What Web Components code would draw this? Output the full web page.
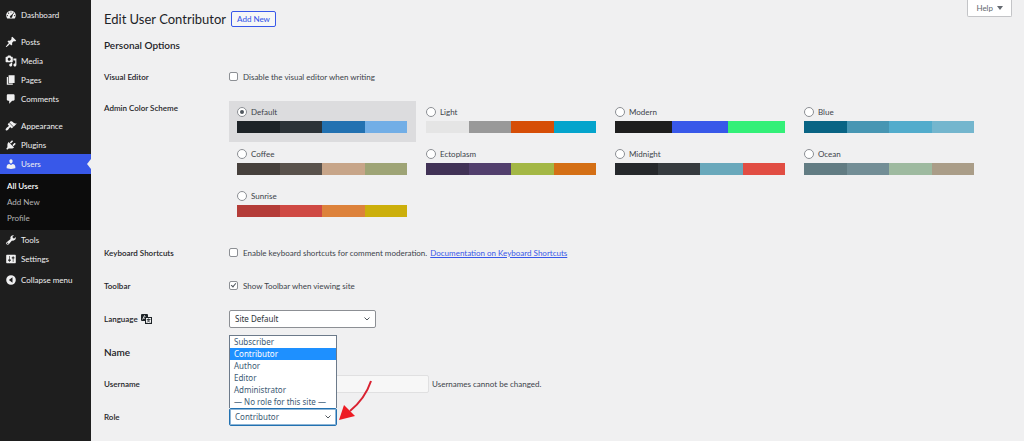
<!DOCTYPE html>
<html lang="en">
<head>
<meta charset="utf-8">
<title>Edit User Contributor</title>
<style>
  html, body { margin: 0; min-height: 100%; }
  body { background: #f0f0f1; color: #3c434a; font: 8px/12px Lato, "Open Sans", sans-serif; }
</style>
</head>
<body>
<wp-admin>
  <admin-menu slot="menu">
    <menu-item icon="dashboard">Dashboard</menu-item>
    <menu-item icon="posts" spaced>Posts</menu-item>
    <menu-item icon="media">Media</menu-item>
    <menu-item icon="pages">Pages</menu-item>
    <menu-item icon="comments">Comments</menu-item>
    <menu-item icon="appearance" spaced>Appearance</menu-item>
    <menu-item icon="plugins">Plugins</menu-item>
    <menu-item icon="users" current>Users</menu-item>
    <sub-menu>
      <sub-item current>All Users</sub-item>
      <sub-item>Add New</sub-item>
      <sub-item>Profile</sub-item>
    </sub-menu>
    <menu-item icon="tools">Tools</menu-item>
    <menu-item icon="settings">Settings</menu-item>
    <menu-item icon="collapse" small>Collapse menu</menu-item>
  </admin-menu>
  <help-tab slot="help">Help</help-tab>
  <page-title action="Add New">Edit User Contributor</page-title>
  <section-title>Personal Options</section-title>
  <form-row label="Visual Editor"><check-field>Disable the visual editor when writing</check-field></form-row>
  <form-row label="Admin Color Scheme" top><color-schemes></color-schemes></form-row>
  <form-row label="Keyboard Shortcuts"><check-field>Enable keyboard shortcuts for comment moderation.<doc-link slot="after">Documentation on Keyboard Shortcuts</doc-link></check-field></form-row>
  <form-row label="Toolbar"><check-field checked>Show Toolbar when viewing site</check-field></form-row>
  <form-row label="Language" icon><select-field label="Language" size="wide" options="Site Default"></select-field></form-row>
  <section-title>Name</section-title>
  <form-row label="Username"><name-field>Usernames cannot be changed.</name-field></form-row>
  <form-row label="Role"><select-field label="Role" open value="Contributor" options="Subscriber|Contributor|Author|Editor|Administrator|— No role for this site —"></select-field></form-row>
</wp-admin>

<script>
const ICONS = {
  dashboard: '<path fill-rule="evenodd" d="M3.76 16h12.48c1.1-1.37 1.76-3.11 1.76-5 0-4.42-3.58-8-8-8s-8 3.58-8 8c0 1.89.66 3.63 1.76 5zM10 4c.55 0 1 .45 1 1s-.45 1-1 1-1-.45-1-1 .45-1 1-1zM6 6c.55 0 1 .45 1 1s-.45 1-1 1-1-.45-1-1 .45-1 1-1zm8 0c.55 0 1 .45 1 1s-.45 1-1 1-1-.45-1-1 .45-1 1-1zm-5.37 5.55L14 7l-2 6c0 1.1-.9 2-2 2s-2-.9-2-2c0-.57.24-1.08.63-1.45zM4 10c.55 0 1 .45 1 1s-.45 1-1 1-1-.45-1-1 .45-1 1-1zm12 0c.55 0 1 .45 1 1s-.45 1-1 1-1-.45-1-1 .45-1 1-1z"/>',
  posts: '<path d="M10.44 3.02l1.82-1.82 6.36 6.35-1.83 1.82c-1.05-.68-2.48-.57-3.41.36l-.75.75c-.92.93-1.04 2.35-.35 3.41l-1.83 1.82-2.41-2.41-2.8 2.79c-.42.42-3.38 2.71-3.8 2.29s1.86-3.39 2.28-3.81l2.79-2.79L4.1 9.36l1.83-1.82c1.05.69 2.48.57 3.4-.36l.75-.75c.93-.92 1.05-2.35.36-3.41z"/>',
  media: '<path fill-rule="evenodd" d="M13 11V4c0-.55-.45-1-1-1h-1.67L9 1H5L3.67 3H2c-.55 0-1 .45-1 1v7c0 .55.45 1 1 1h10c.55 0 1-.45 1-1zM7 4.5c1.38 0 2.5 1.12 2.5 2.5S8.38 9.5 7 9.5 4.5 8.38 4.5 7 5.62 4.5 7 4.5zM14 6h5v10.5c0 1.38-1.12 2.5-2.5 2.5S14 17.88 14 16.5s1.12-2.5 2.5-2.5c.17 0 .34.02.5.05V9h-3V6zm-4 8.05V13h2v3.5c0 1.38-1.12 2.5-2.5 2.5S7 17.88 7 16.5 8.12 14 9.5 14c.17 0 .34.02.5.05z"/>',
  pages: '<path d="M6 15V2h10v13H6zm-1 1h8v2H3V5h2v11z"/>',
  comments: '<path d="M5 2h9c1.1 0 2 .9 2 2v7c0 1.1-.9 2-2 2h-2l-5 5v-5H5c-1.1 0-2-.9-2-2V4c0-1.1.9-2 2-2z"/>',
  appearance: '<path d="M14.48 11.06L7.41 3.99l1.5-1.5c.5-.56 2.3-.47 3.51.32 1.21.8 1.43 1.28 2.91 2.1 1.18.64 2.45 1.26 4.45.85zm-.71.71L6.7 4.7 4.93 6.47c-.39.39-.39 1.02 0 1.41l1.06 1.06c.39.39.39 1.03 0 1.42-.6.6-1.43 1.11-2.21 1.69-.35.26-.7.53-1.01.84C1.43 14.23.4 16.08 1.4 17.07c.99 1 2.84-.03 4.18-1.36.31-.31.58-.66.85-1.02.57-.78 1.08-1.61 1.69-2.21.39-.39 1.02-.39 1.41 0l1.06 1.06c.39.39 1.02.39 1.41 0z"/>',
  plugins: '<path d="M13.11 4.36L9.87 7.6 8 5.73l3.24-3.24c.35-.34 1.05-.2 1.56.32.52.51.66 1.21.31 1.55zm-8 1.77l.91-1.12 9.01 9.01-1.19.84c-.71.71-2.63 1.16-3.82 1.16H6.14L4.9 17.26c-.59.59-1.54.59-2.12 0-.59-.58-.59-1.53 0-2.12l1.24-1.24v-3.88c0-1.13.4-3.19 1.09-3.89zm7.26 3.97l3.24-3.24c.34-.35 1.04-.21 1.55.31.52.51.66 1.21.31 1.55l-3.24 3.25z"/>',
  users: '<path d="M10 9.25c-2.27 0-2.73-3.44-2.73-3.44C7 4.02 7.82 2 9.97 2c2.16 0 2.98 2.02 2.71 3.81 0 0-.41 3.44-2.68 3.44zm0 2.57L12.72 10c2.39 0 4.52 2.33 4.52 4.53v2.49s-3.65 1.13-7.24 1.13c-3.65 0-7.24-1.13-7.24-1.13v-2.49c0-2.25 1.94-4.48 4.47-4.48z"/>',
  tools: '<path fill-rule="evenodd" d="M16.68 9.77c-1.34 1.34-3.3 1.67-4.95.99l-5.41 6.52c-.99.99-2.59.99-3.58 0s-.99-2.59 0-3.57l6.52-5.42c-.68-1.65-.35-3.61.99-4.95 1.28-1.28 3.12-1.62 4.72-1.06l-2.89 2.89 2.82 2.82 2.86-2.87c.53 1.58.18 3.39-1.08 4.65zM3.81 16.21c.4.39 1.04.39 1.43 0 .4-.4.4-1.04 0-1.43-.39-.4-1.03-.4-1.43 0-.39.39-.39 1.03 0 1.43z"/>',
  settings: '<path fill-rule="evenodd" d="M18 16V4c0-.55-.45-1-1-1H3c-.55 0-1 .45-1 1v12c0 .55.45 1 1 1h14c.55 0 1-.45 1-1zM8 11h1c.55 0 1 .45 1 1s-.45 1-1 1H8v1.5c0 .28-.22.5-.5.5s-.5-.22-.5-.5V13H6c-.55 0-1-.45-1-1s.45-1 1-1h1V5.5c0-.28.22-.5.5-.5s.5.22.5.5V11zm5-2h-1c-.55 0-1-.45-1-1s.45-1 1-1h1V5.5c0-.28.22-.5.5-.5s.5.22.5.5V7h1c.55 0 1 .45 1 1s-.45 1-1 1h-1v5.5c0 .28-.22.5-.5.5s-.5-.22-.5-.5V9z"/>',
  collapse: '<path fill-rule="evenodd" d="M10 2a8 8 0 1 0 0 16 8 8 0 0 0 0-16zM12.500 5.500v9L6.500 10z"/>'
};
const svg = (name) => `<svg viewBox="0 0 20 20" aria-hidden="true">${ICONS[name]}</svg>`;

/* Base class: renders css() and html() into an open shadow root. */
class Base extends HTMLElement {
  connectedCallback() {
    if (this.shadowRoot) return;
    const t = document.createElement('template');
    t.innerHTML = `<style>*{box-sizing:border-box}${this.css()}</style>${this.html()}`;
    this.attachShadow({ mode: 'open' }).append(t.content.cloneNode(true));
  }
  attr(name) { return this.getAttribute(name) || ''; }
}
const define = (name, css, html) => customElements.define(name, class extends Base {
  css() { return css; }
  html() { return typeof html === 'function' ? html(this) : html; }
});

define('wp-admin', `
  :host { display: grid; grid-template-columns: 91px minmax(0, 1fr); min-height: 100vh; overflow: hidden; }
  aside { background: #1e1e1e; }
  main { position: relative; padding: 10px 16px 14px 13px; }
  .help { position: absolute; top: 0; right: 12px; }
`, `<aside><slot name="menu"></slot></aside><main><div class="help"><slot name="help"></slot></div><slot></slot></main>`);

define('admin-menu', `:host { display: block; padding-top: 5px; } nav { display: flex; flex-direction: column; }`,
  `<nav aria-label="Main menu"><slot></slot></nav>`);

define('menu-item', `
  :host { display: block; }
  :host([spaced]) { margin-top: 8px; }
  :host([small]) { margin-top: 2px; }
  a, button { position: relative; display: flex; align-items: center; gap: 4px; width: 100%; height: 19px; padding: 0 0 0 5px;
    border: 0; background: none; color: #f0f0f1; font: inherit; text-decoration: none; white-space: nowrap; }
  svg { width: 12px; height: 12px; fill: #f0f0f1; flex: none; }
  :host([current]) a { height: 20px; background: #3858e9; }
  :host([current]) a::after { content: ""; position: absolute; right: 0; top: 5px; border: 5px solid transparent; border-left: 0; border-right: 4px solid #f0f0f1; }
`, el => el.hasAttribute('small')
  ? `<button type="button">${svg(el.attr('icon'))}<slot></slot></button>`
  : `<a href="#">${svg(el.attr('icon'))}<slot></slot></a>`);

define('sub-menu', `:host { display: block; padding: 4px 0; background: #0c0c0c; }`, `<slot></slot>`);
define('sub-item', `
  :host { display: block; }
  a { display: block; padding-left: 7px; color: #b4b4b4; line-height: 16px; text-decoration: none; }
  :host([current]) a { color: #fff; font-weight: 600; }
`, `<a href="#"><slot></slot></a>`);

define('help-tab', `
  button { display: flex; align-items: center; gap: 4px; height: 17px; padding: 0 8px; background: #fff; border: 1px solid #c3c4c7; border-top: 0;
    border-radius: 0 0 2px 2px; color: #646970; font: inherit; }
  i { border: 3px solid transparent; border-top: 4px solid #646970; border-bottom: 0; }
`, `<button type="button"><slot></slot><i></i></button>`);

define('page-title', `
  :host { display: flex; align-items: center; gap: 5px; height: 18px; }
  h1 { margin: 0; font-size: 13px; line-height: 18px; font-weight: 400; color: #1d2327; }
  button { height: 16px; padding: 0 5px; border: 1px solid #3858e9; border-radius: 2px; background: #f6f7f7; color: #3858e9; font: inherit; font-weight: 500; line-height: 12px; }
`, el => `<h1><slot></slot></h1><button type="button">${el.attr('action')}</button>`);

define('section-title', `
  :host { display: block; padding: 10px 0 8px; }
  h2 { margin: 0; font-size: 10px; line-height: 14px; font-weight: 600; color: #1d2327; }
`, `<h2><slot></slot></h2>`);

define('form-row', `
  :host { display: grid; grid-template-columns: 125px minmax(0, 1fr); align-items: center; min-height: 33px; }
  :host([top]) { align-items: start; padding: 8px 0 10px; }
  .label { display: flex; align-items: center; gap: 3px; font-weight: 600; color: #1d2327; }
  :host([top]) .label { padding-top: 1px; }
  svg { width: 11px; height: 10px; }
`, el => `<div class="label">${el.attr('label')}${el.hasAttribute('icon') ? `
  <svg viewBox="0 0 11 10" aria-hidden="true"><rect x="0" y="0" width="7" height="7" rx="1" fill="#1d2327"/><path d="M1.500 5.500l2-4 2 4M2.200 4.200h2.600" stroke="#f0f0f1" stroke-width=".8" fill="none"/><rect x="4.500" y="3.500" width="6" height="6" fill="#f0f0f1" stroke="#1d2327"/><path d="M5.800 5.500h3.500M7.500 4.500v1M9 5.500L6 8.500M6.500 6l2.500 2.500" stroke="#1d2327" stroke-width=".8" fill="none"/></svg>` : ''}</div><div><slot></slot></div>`);

const TICK = `
  input { appearance: none; flex: none; width: 9px; height: 9px; margin: 0; border: 1px solid #8c8f94; background: #fff; }
`;
define('check-field', TICK + `
  :host { display: flex; align-items: center; gap: 3px; }
  label { display: flex; align-items: center; gap: 5px; }
  input { border-radius: 2px; position: relative; }
  input:checked::after { content: ""; position: absolute; left: 2px; top: 0; width: 2px; height: 4px; border: solid #50575e; border-width: 0 1px 1px 0; transform: rotate(40deg); }
`, el => `<label><input type="checkbox" ${el.hasAttribute('checked') ? 'checked' : ''}><span><slot></slot></span></label><slot name="after"></slot>`);

define('doc-link', `a { color: #3858e9; text-decoration: underline; }`, `<a href="#"><slot></slot></a>`);

const SCHEMES = [
  ['Default', '#1d2327', '#2c3338', '#2271b1', '#72aee6'],
  ['Light', '#e5e5e5', '#999', '#d64e07', '#04a4cc'],
  ['Modern', '#1e1e1e', '#3858e9', '#33f078'],
  ['Blue', '#096484', '#4796b3', '#52accc', '#74b6ce'],
  ['Coffee', '#46403c', '#59524c', '#c7a589', '#9ea476'],
  ['Ectoplasm', '#413256', '#523f6d', '#a3b745', '#d46f15'],
  ['Midnight', '#25282b', '#363b3f', '#69a8bb', '#e14d43'],
  ['Ocean', '#627c83', '#738e96', '#9ebaa0', '#aa9d88'],
  ['Sunrise', '#b43c38', '#cf4944', '#dd823b', '#ccaf0b']
];
define('color-schemes', TICK + `
  :host { display: grid; grid-template-columns: repeat(auto-fill, 187px); gap: 1px 2px; }
  label { display: flex; flex-direction: column; gap: 3px; height: 41px; padding: 5px 9px 0 8px; }
  label:has(:checked) { background: #dcdcde; }
  .name { display: flex; align-items: center; gap: 4px; }
  .bar { display: flex; height: 12px; }
  .bar i { flex: 1; }
  input { width: 10px; height: 10px; border-radius: 50%; display: grid; place-items: center; }
  input:checked::after { content: ""; width: 4px; height: 4px; border-radius: 50%; background: #50575e; }
`, () => SCHEMES.map(([name, ...colors], i) => `<label><span class="name"><input type="radio" name="scheme" ${i ? '' : 'checked'}>${name}</span>
  <span class="bar">${colors.map(c => `<i style="background:${c}"></i>`).join('')}</span></label>`).join(''));

define('select-field', `
  :host { display: block; position: relative; width: 108px; }
  :host([size=wide]) { width: 147px; }
  select { display: block; appearance: none; width: 100%; height: 18px; padding: 0 16px 0 5px; border: 1px solid #8c8f94; border-radius: 2px; font: inherit; font-family: "Noto Sans", sans-serif; color: #2c3338;
    background: #fff url('data:image/svg+xml,<svg xmlns="http://www.w3.org/2000/svg" viewBox="0 0 6 4"><path d="M.5.5L3 3 5.500.5" fill="none" stroke="%2350575e"/></svg>') no-repeat right 5px center / 6px 4px; }
  :host([open]) select { border-color: #2271b1; box-shadow: inset 0 0 0 1px #8db5d6; color: #3c5a74; }
  ul { position: absolute; z-index: 1; left: 0; right: 0; bottom: 100%; margin: 0; padding: 0; list-style: none; background: #fff; border: 1px solid #6c7a8a; border-bottom: 0; color: #3c5a74; font-family: "Noto Sans", sans-serif; }
  li { padding-left: 4px; line-height: 12px; white-space: nowrap; }
  li[aria-selected=true] { background: #1e90ff; color: #fff; }
  svg { position: absolute; z-index: 2; left: 109px; bottom: 4px; width: 36px; height: 50px; }
`, el => {
  const options = el.attr('options').split('|');
  const on = o => o === el.attr('value');
  const open = el.hasAttribute('open');
  return `<select aria-label="${el.attr('label')}">${options.map(o => `<option ${on(o) ? 'selected' : ''}>${o}</option>`).join('')}</select>` +
    (open ? `<ul role="listbox">${options.map(o => `<li role="option" aria-selected="${on(o)}">${o}</li>`).join('')}</ul>
    <svg viewBox="0 0 36 50" aria-hidden="true"><path d="M33 9C29 21 23 30 12 39" fill="none" stroke="#d92231" stroke-width="2"/><path d="M1 48L6 33 17 44z" fill="#ed1c24"/></svg>` : '');
});

define('name-field', `
  :host { display: flex; align-items: center; gap: 3px; }
  input { width: 200px; height: 18px; border: 1px solid #e0e0e1; border-radius: 2px; background: #f7f7f7; font: inherit; }
`, `<input id="u" type="text" disabled aria-label="Username"><label for="u"><slot></slot></label>`);
</script>
</body>
</html>
